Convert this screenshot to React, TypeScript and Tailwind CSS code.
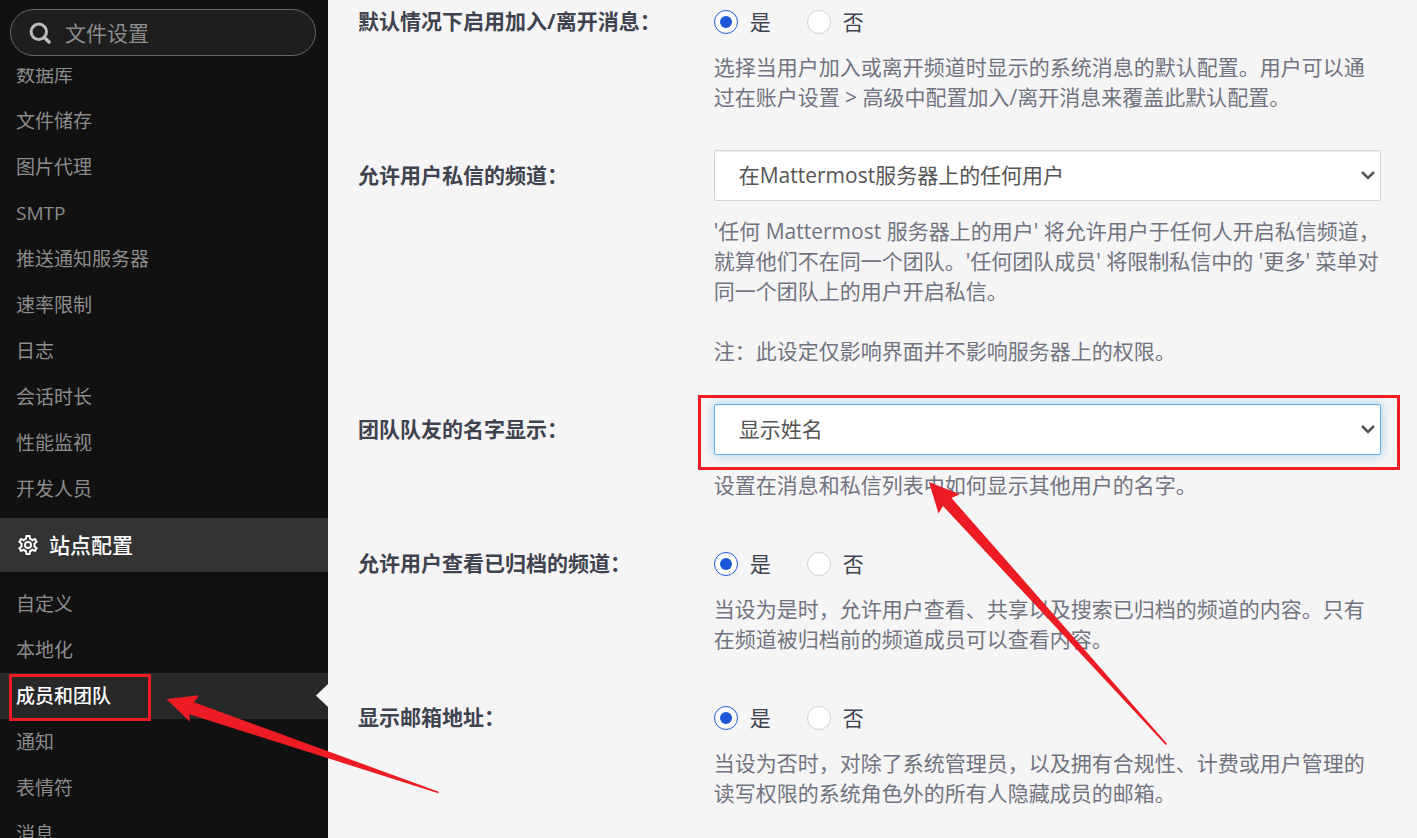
import { useId, useState, type ReactNode } from "react";
import { clsx } from "clsx";

const serverItems = [
  "数据库",
  "文件储存",
  "图片代理",
  "SMTP",
  "推送通知服务器",
  "速率限制",
  "日志",
  "会话时长",
  "性能监视",
  "开发人员",
];

const siteItems = ["自定义", "本地化", "成员和团队", "通知", "表情符", "消息"];

const activeItem = "成员和团队";

function SearchIcon() {
  return (
    <svg width="22" height="22" viewBox="0 0 22 22" fill="none" stroke="currentColor" strokeWidth="3" aria-hidden="true">
      <circle cx="9.8" cy="9.8" r="7.7" />
      <path d="M15.2 15.2 20 20" strokeWidth="3.4" strokeLinecap="round" />
    </svg>
  );
}

function CogIcon() {
  return (
    <svg width="24" height="24" viewBox="0 0 24 24" fill="currentColor" aria-hidden="true">
      <path d="M12,8A4,4 0 0,1 16,12A4,4 0 0,1 12,16A4,4 0 0,1 8,12A4,4 0 0,1 12,8M12,10A2,2 0 0,0 10,12A2,2 0 0,0 12,14A2,2 0 0,0 14,12A2,2 0 0,0 12,10M10,22C9.75,22 9.54,21.82 9.5,21.58L9.13,18.93C8.5,18.68 7.96,18.34 7.44,17.94L4.95,18.95C4.73,19.03 4.46,18.95 4.34,18.73L2.34,15.27C2.21,15.05 2.27,14.78 2.46,14.63L4.57,12.97L4.5,12L4.57,11L2.46,9.37C2.27,9.22 2.21,8.95 2.34,8.73L4.34,5.27C4.46,5.05 4.73,4.96 4.95,5.05L7.44,6.05C7.96,5.66 8.5,5.32 9.13,5.07L9.5,2.42C9.54,2.18 9.75,2 10,2H14C14.25,2 14.46,2.18 14.5,2.42L14.87,5.07C15.5,5.32 16.04,5.66 16.56,6.05L19.05,5.05C19.27,4.96 19.54,5.05 19.66,5.27L21.66,8.73C21.79,8.95 21.73,9.22 21.54,9.37L19.43,11L19.5,12L19.43,13L21.54,14.63C21.73,14.78 21.79,15.05 21.66,15.27L19.66,18.73C19.54,18.95 19.27,19.04 19.05,18.95L16.56,17.95C16.04,18.34 15.5,18.68 14.87,18.93L14.5,21.58C14.46,21.82 14.25,22 14,22H10M11.25,4L10.88,6.61C9.68,6.86 8.62,7.5 7.85,8.39L5.44,7.35L4.69,8.65L6.8,10.2C6.4,11.37 6.4,12.64 6.8,13.8L4.68,15.36L5.43,16.66L7.86,15.62C8.63,16.5 9.68,17.14 10.87,17.38L11.24,20H12.76L13.13,17.39C14.32,17.14 15.37,16.5 16.14,15.62L18.57,16.66L19.32,15.36L17.2,13.81C17.6,12.64 17.6,11.37 17.2,10.2L19.31,8.65L18.56,7.35L16.15,8.39C15.38,7.5 14.32,6.86 13.12,6.62L12.75,4H11.25Z" />
    </svg>
  );
}

function NavItem({ label }: { label: string }) {
  const active = label === activeItem;

  return (
    <li className="relative">
      <a
        href="#"
        aria-current={active ? "page" : undefined}
        className={clsx(
          "block px-4 text-[19px] leading-[46px]",
          active ? "bg-[#282828] font-medium text-white" : "text-[#8c8c8c]"
        )}
      >
        {label}
      </a>
      {active && (
        <>
          <svg className="absolute top-[11px] right-0" width="12" height="23" viewBox="0 0 12 23" aria-hidden="true">
            <path d="M12 0v23L0 11.500z" fill="#f5f5f5" />
          </svg>
          <span className="absolute top-px left-[9px] h-[47px] w-[142px] border-3 border-[#ed1c24]" />
        </>
      )}
    </li>
  );
}

function Sidebar() {
  return (
    <aside className="flex w-[328px] shrink-0 flex-col bg-[#111111]">
      <div className="shrink-0 pt-[9px] pr-3 pb-3 pl-2.5">
        <label className="flex h-[47px] items-center gap-3.5 rounded-full border border-[#666666] bg-[#1e1e1e] pl-[18px] text-[#bbbbbb]">
          <SearchIcon />
          <input
            type="text"
            aria-label="文件设置"
            placeholder="文件设置"
            className="min-w-0 flex-1 bg-transparent text-[21px] text-white outline-none placeholder:text-[#8c8c8c]"
          />
        </label>
      </div>
      <nav className="min-h-0 flex-1 overflow-hidden">
        <ul className="-mt-4 pb-1.5">
          {serverItems.map((label) => (
            <NavItem key={label} label={label} />
          ))}
        </ul>
        <h2 className="flex h-[54px] items-center gap-[9px] bg-[#333333] pl-4 text-[21px] font-medium text-white">
          <CogIcon />
          站点配置
        </h2>
        <ul className="pt-[9px]">
          {siteItems.map((label) => (
            <NavItem key={label} label={label} />
          ))}
        </ul>
      </nav>
    </aside>
  );
}

const rowClass = "grid grid-cols-[1fr_2fr] gap-x-[22px]";
const labelClass = "pt-2.5 font-bold text-[#3f4350]";
const helpClass = "mt-[15px] text-[#717480]";

function RadioSetting({ label, children }: { label: string; children: ReactNode }) {
  const id = useId();
  const [value, setValue] = useState(true);

  return (
    <div role="radiogroup" aria-labelledby={id} className={rowClass}>
      <div id={id} className={labelClass}>
        {label}
      </div>
      <div className="pt-[11px]">
        <div className="flex gap-9 text-[#3f4350]">
          {[true, false].map((option) => (
            <label key={String(option)} className="flex items-center gap-3">
              <input
                type="radio"
                name={id}
                checked={value === option}
                onChange={() => setValue(option)}
                className="grid size-6 appearance-none place-items-center rounded-full border border-[#d0d0d0] bg-white before:size-3 before:rounded-full checked:border-[#1c58d9] checked:before:bg-[#1c58d9]"
              />
              {option ? "是" : "否"}
            </label>
          ))}
        </div>
        <div className={helpClass}>{children}</div>
      </div>
    </div>
  );
}

type SelectSettingProps = {
  label: string;
  options: string[];
  highlighted?: boolean;
  children: ReactNode;
};

function SelectSetting({ label, options, highlighted, children }: SelectSettingProps) {
  const id = useId();

  return (
    <div className={rowClass}>
      <label htmlFor={id} className={labelClass}>
        {label}
      </label>
      <div>
        <div className="relative">
          <select
            id={id}
            className={clsx(
              "block h-[51px] w-full appearance-none rounded-xs border bg-white px-6 pb-0.5 text-[#555555] outline-none",
              highlighted
                ? "border-[#66afe9] shadow-[inset_0_1px_1px_rgba(0,0,0,0.075),0_0_11px_rgba(102,175,233,0.6)]"
                : "border-[#d4d4d4] shadow-[inset_0_1px_1px_rgba(0,0,0,0.075)]"
            )}
          >
            {options.map((option) => (
              <option key={option}>{option}</option>
            ))}
          </select>
          <svg
            className="pointer-events-none absolute top-[21px] right-1.5"
            width="14"
            height="9"
            viewBox="0 0 14 9"
            fill="none"
            stroke="#555555"
            strokeWidth="2.5"
            aria-hidden="true"
          >
            <path d="M1 1l6 6 6-6" />
          </svg>
          {highlighted && (
            <span className="pointer-events-none absolute -top-[9px] -right-[19px] -bottom-[15px] -left-4 border-3 border-[#ed1c24]" />
          )}
        </div>
        <div className={helpClass}>{children}</div>
      </div>
    </div>
  );
}

export default function App() {
  return (
    <div
      lang="zh-CN"
      className="relative flex h-screen overflow-hidden bg-[#f5f5f5] font-['Open_Sans','Noto_Sans_CJK_SC',sans-serif] text-[21px] leading-[30px]"
    >
      <Sidebar />
      <main className="min-w-0 flex-1 overflow-hidden pr-9 pl-[30px]">
        <form className="-mt-1 flex flex-col gap-[38px]">
          <RadioSetting label="默认情况下启用加入/离开消息：">
            选择当用户加入或离开频道时显示的系统消息的默认配置。用户可以通过在账户设置 &gt; 高级中配置加入/离开消息来覆盖此默认配置。
          </RadioSetting>
          <SelectSetting
            label="允许用户私信的频道："
            options={["在Mattermost服务器上的任何用户", "任何团队成员"]}
          >
            <p>
              '任何 Mattermost 服务器上的用户' 将允许用户于任何人开启私信频道，就算他们不在同一个团队。'任何团队成员' 将限制私信中的 '更多' 菜单对同一个团队上的用户开启私信。
            </p>
            <p className="mt-[30px]">注：此设定仅影响界面并不影响服务器上的权限。</p>
          </SelectSetting>
          <SelectSetting
            label="团队队友的名字显示："
            options={["显示姓名", "显示用户名", "优先显示昵称"]}
            highlighted
          >
            设置在消息和私信列表中如何显示其他用户的名字。
          </SelectSetting>
          <RadioSetting label="允许用户查看已归档的频道：">
            当设为是时，允许用户查看、共享以及搜索已归档的频道的内容。只有在频道被归档前的频道成员可以查看内容。
          </RadioSetting>
          <RadioSetting label="显示邮箱地址：">
            当设为否时，对除了系统管理员，以及拥有合规性、计费或用户管理的读写权限的系统角色外的所有人隐藏成员的邮箱。
          </RadioSetting>
        </form>
      </main>

      {/* callout arrows */}
      <svg
        className="pointer-events-none absolute top-[690px] left-40"
        width="280"
        height="110"
        viewBox="160 690 280 110"
        fill="#ed1c24"
        aria-hidden="true"
      >
        <path d="M166.500 699 199 695.300 194 702.300 438.700 791.700 438.300 793.200 189.300 714.300 190 721.700z" />
      </svg>
      <svg
        className="pointer-events-none absolute top-[480px] left-[920px]"
        width="250"
        height="270"
        viewBox="920 480 250 270"
        fill="#ed1c24"
        aria-hidden="true"
      >
        <path d="M929 482 959.700 494.300 951.500 498 1167 743.800 1165.800 745 943 506 938.500 513.500z" />
      </svg>
    </div>
  );
}
